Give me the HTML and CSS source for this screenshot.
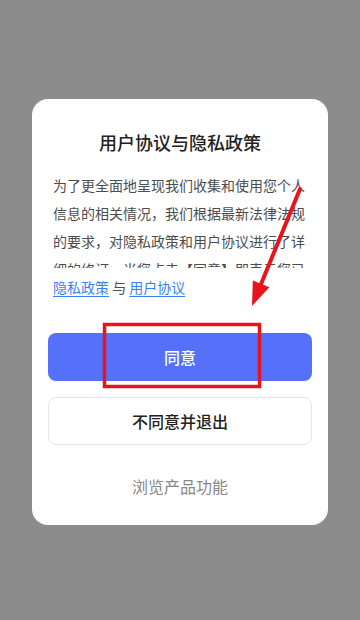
FILE: index.html
```html
<!DOCTYPE html>
<html lang="zh-CN">
<head>
<meta charset="utf-8">
<title>用户协议与隐私政策</title>
<link rel="stylesheet" href="styles.css">
</head>
<body>
<div class="screen">
  <div class="dialog">
    <h1 class="title">用户协议与隐私政策</h1>
    <div class="content">
      <div class="scroll">为了更全面地呈现我们收集和使用您个人信息的相关情况，我们根据最新法律法规的要求，对隐私政策和用户协议进行了详细的修订。当您点击【同意】即表示您已阅读并同意以下协议内容。</div>
      <div class="links"><a class="link" href="#">隐私政策</a> 与 <a class="link" href="#">用户协议</a></div>
    </div>
    <button class="btn btn-primary">同意</button>
    <button class="btn btn-secondary">不同意并退出</button>
    <div class="browse">浏览产品功能</div>
  </div>
  <svg class="annotation" width="360" height="620" viewBox="0 0 360 620" xmlns="http://www.w3.org/2000/svg">
    <rect x="104.5" y="324.5" width="155" height="62" fill="none" stroke="#e8141c" stroke-width="3.5"/>
    <line x1="300" y1="189" x2="259" y2="289" stroke="#e8141c" stroke-width="4" stroke-linecap="round"/>
    <polygon points="252,306 252.8,280.4 269.4,287.2" fill="#e8141c"/>
  </svg>
</div>
</body>
</html>
```

FILE: styles.css
```css
* { box-sizing: border-box; }
html, body {
  margin: 0;
  padding: 0;
}
body {
  background: #8c8c8c;
  font-family: "Noto Sans CJK SC", "Noto Sans", sans-serif;
}
.screen {
  position: relative;
  width: 360px;
  height: 620px;
  padding-top: 99px;
  display: flex;
  flex-direction: column;
  align-items: center;
}
.dialog {
  width: 296px;
  background: #ffffff;
  border-radius: 16px;
  padding: 31px 16px 27px;
  display: flex;
  flex-direction: column;
}
.title {
  margin: 0;
  font-size: 18px;
  line-height: 24px;
  font-weight: 500;
  color: #222222;
  text-align: center;
}
.content {
  padding: 0 5px;
  margin-top: 17px;
}
.scroll {
  height: 97px;
  overflow: hidden;
  font-size: 14px;
  line-height: 28px;
  color: #4d4d4d;
}
.links {
  margin-top: 5px;
  font-size: 14px;
  line-height: 28px;
  color: #4d4d4d;
}
.link {
  color: #3b7ff2;
  text-decoration: underline;
  text-underline-offset: 3px;
}
.btn {
  display: block;
  width: 100%;
  height: 48px;
  border-radius: 8px;
  font-family: "Noto Sans CJK SC", "Noto Sans", sans-serif;
  font-size: 16px;
  cursor: pointer;
}
.btn-primary {
  margin-top: 32px;
  background: #5571fa;
  color: #ffffff;
  border: none;
  font-weight: 500;
}
.btn-secondary {
  margin-top: 16px;
  background: #ffffff;
  color: #222222;
  border: 1px solid #e6e6e6;
  font-weight: 500;
}
.browse {
  margin-top: 29px;
  font-size: 16px;
  line-height: 24px;
  color: #888888;
  text-align: center;
}
.annotation {
  position: absolute;
  left: 0;
  top: 0;
  pointer-events: none;
}
```
